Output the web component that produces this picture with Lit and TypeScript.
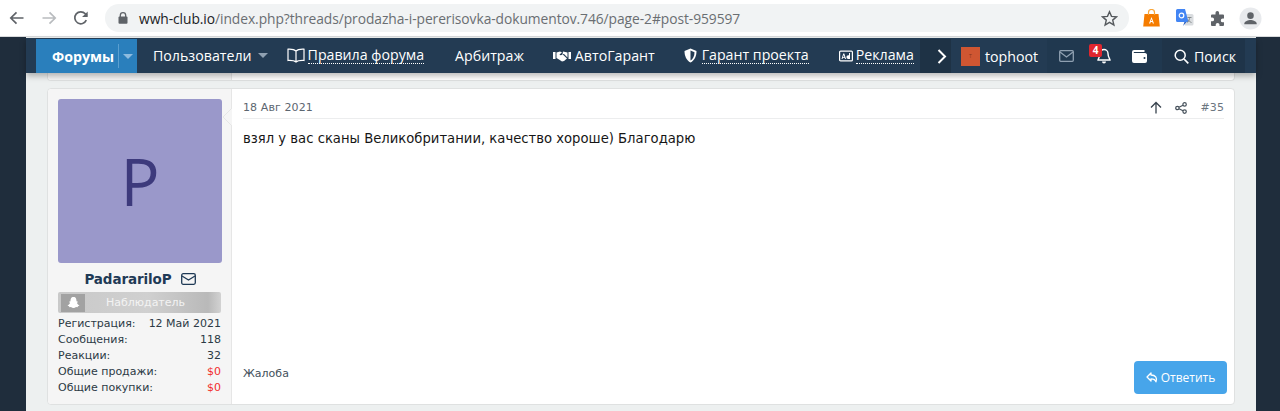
import { LitElement, html, css } from "lit";
import { customElement } from "lit/decorators.js";

const caret = html`<svg class="caret" width="10" height="5" viewBox="0 0 10 5"><path d="M0 0h10L5 5z" fill="currentColor"/></svg>`;

@customElement("app-root")
export class AppRoot extends LitElement {
  static styles = css`
    :host { display: block; width: 1280px; height: 411px; overflow: hidden; background: #1f2d3c; font-family: "DejaVu Sans", sans-serif; }
    .chrome { height: 37px; box-sizing: border-box; background: #fff; display: flex; align-items: center; border-bottom: 1px solid #d8dadc; padding-left: 8px; }
    .navbtn { width: 18px; height: 18px; flex: none; }
    .b1 { margin-right: 14px; } .b2 { margin-right: 14px; }
    .omni { margin-left: 15px; width: 1024px; height: 28px; flex: none; box-sizing: border-box; border-radius: 14px; background: #f1f3f4; display: flex; align-items: center; padding: 0 11px 0 13px; font: 13.8px "Open Sans", sans-serif; letter-spacing: -0.06px; color: #6a6e72; white-space: nowrap; }
    .omni b { font-weight: 400; color: #202124; }
    .lock { margin-right: 11px; flex: none; }
    .star { margin-left: auto; flex: none; }
    .ext { display: flex; align-items: center; margin-left: 14px; gap: 16px; }
    .ext svg { flex: none; display: block; }
    .ext .profile { margin-left: -2px; }
    .page { width: 1230px; margin-left: 26px; height: 374px; background: #edf0f0; position: relative; }
    nav { height: 35px; background: #233b53; color: #fff; display: flex; align-items: stretch; font: 14.2px "Open Sans", sans-serif; box-shadow: 0 3px 6px rgba(0,0,0,.28); position: relative; z-index: 2; white-space: nowrap; }
    .top { height: 1px; }
    .tabs { display: flex; align-items: center; flex: none; width: 894px; }
    .forums { width: 101px; margin-left: 10px; height: 34px; margin-top: 1px; background: #2a7fbc; display: flex; align-items: center; font-weight: 700; box-sizing: border-box; padding-left: 16px; flex: none; }
    .forums .sep { width: 1px; height: 24px; background: #5a9fd0; margin: 0 4px 0 4px; }
    .forums .caret { color: #8dbcdf; }
    .caret { display: block; }
    .it { display: flex; align-items: center; flex: none; }
    .it svg.ic { margin-right: 3px; flex: none; }
    .u { border-bottom: 1px dotted #fff; line-height: 16px; }
    .users { margin-left: 16px; } .users .caret { margin-left: 6px; color: #8fa0b1; }
    .rules { margin-left: 19px; } .arb { margin-left: 31px; } .ag { margin-left: 29px; } .ag svg.ic { margin-right: 4px; } .gp { margin-left: 29px; } .gp svg.ic { margin-right: 5px; } .ad { margin-left: 30px; }
    .more { width: 31px; box-sizing: border-box; padding-left: 17px; background: #1e3245; display: flex; align-items: center; flex: none; height: 34px; margin-top: 1px; }
    .right { display: flex; flex: 1; align-items: center; background: #233b53; height: 34px; margin-top: 1px; }
    .user { display: flex; align-items: center; margin-left: 10px; width: 86px; font-size: 14.2px; flex: none; }
    .ava { width: 19px; height: 19px; background: #cf5632; color: #8a3218; font: 5px "Open Sans", sans-serif; display: flex; align-items: center; justify-content: center; margin-right: 5px; }
    .cell { display: flex; align-items: center; justify-content: center; flex: none; height: 34px; position: relative; background: #20384f; }
    .mail { width: 38px; } .bell { width: 37px; } .wallet { width: 40px; box-sizing: border-box; padding-right: 5px; }
    .badge { position: absolute; left: 4px; top: 5px; width: 13px; height: 13px; background: #e0262e; border-radius: 2px; font: 700 10px/13px "Open Sans", sans-serif; text-align: center; }
    .search { background: #1f3449; padding-left: 12px; gap: 5px; width: 83px; box-sizing: border-box; justify-content: flex-start; }
    .prev { height: 8px; margin: 0 21px 7px 21px; box-sizing: border-box; background: #fff; border: 1px solid #dfe1e1; border-top: 0; border-radius: 0 0 4px 4px; display: flex; }
    .prev i { display: block; width: 183px; background: #f5f5f5; border-right: 1px solid #e6e6e6; border-bottom-left-radius: 4px; }
    .post { height: 317px; margin: 0 21px; box-sizing: border-box; background: #fff; border: 1px solid #dfe1e1; border-radius: 4px; display: flex; }
    .side { width: 184px; flex: none; box-sizing: border-box; background: #f5f5f5; border-right: 1px solid #e6e6e6; padding: 10px 9px 0 10px; border-radius: 4px 0 0 4px; position: relative; }
    .arrow { position: absolute; right: -1px; top: 19px; width: 9px; height: 18px; }
    .avatar { width: 164px; height: 164px; background: #9a98ca; color: #3d3a7c; border-radius: 3px; display: flex; align-items: center; justify-content: center; font: 65px/1 "Open Sans", sans-serif; }
    .name { display: flex; justify-content: center; align-items: center; gap: 9px; margin-top: 7px; height: 18px; font: 700 13.5px "DejaVu Sans", sans-serif; color: #1f3a56; letter-spacing: -.1px; }
    .rank { height: 21px; margin: 4px 1px 0 0; background: linear-gradient(90deg,#c9c9c9 0,#d0d0d0 55%,#b9b9b9 92%,#d2d2d2 100%); border-radius: 2px; display: flex; align-items: center; color: #f3f3f3; font-size: 11px; }
    .rank .g { width: 24px; height: 18px; margin-left: 3px; background: #a2a2a2; display: flex; align-items: center; justify-content: center; flex: none; }
    .rank span { flex: 1; text-align: center; padding-right: 15px; }
    dl { margin: 3px 1px 0 0; font-size: 11px; line-height: 16px; color: #2c3a45; }
    dl div { display: flex; justify-content: space-between; }
    dt, dd { margin: 0; white-space: nowrap; }
    .red { color: #f22c2c; }
    .main { flex: 1; min-width: 0; padding: 0 7px 0 11px; display: flex; flex-direction: column; }
    .head { height: 30px; margin-right: 3px; padding-top: 8px; box-sizing: border-box; border-bottom: 1px solid #ecedee; display: flex; align-items: center; font-size: 11px; color: #5c6670; letter-spacing: .1px; }
    .head .acts { margin-left: auto; display: flex; align-items: center; gap: 13px; font-size: 11px; color: #6b7680; }
    .head svg { display: block; }
    .msg { font-size: 13.2px; line-height: 18px; color: #161616; margin-top: 11px; flex: 1; }
    .foot { display: flex; justify-content: space-between; align-items: center; height: 33px; margin-bottom: 10px; font-size: 11px; color: #43505c; }
    .foot > span { margin-bottom: 8px; }
    .reply { width: 93px; height: 33px; box-sizing: border-box; background: #47a5ea; border-radius: 4px; color: #fff; font: 12px "Open Sans", sans-serif; display: flex; align-items: center; justify-content: center; gap: 2px; }
    .reply svg { flex: none; }
  `;

  render() {
    return html`
      <div class="chrome">
        <svg class="navbtn b1" viewBox="0 0 18 18"><path d="M15.5 9H3M8.5 3.3 2.8 9l5.7 5.7" fill="none" stroke="#5f6368" stroke-width="1.7"/></svg>
        <svg class="navbtn b2" viewBox="0 0 18 18"><path d="M2.5 9H15M9.500 3.300 15.200 9l-5.700 5.700" fill="none" stroke="#b9bcbf" stroke-width="1.7"/></svg>
        <svg class="navbtn" viewBox="0 0 18 18"><path d="M14.3 11.200A6 6 0 1 1 13.300 4.800L15 6.500" fill="none" stroke="#5f6368" stroke-width="1.7"/><path d="M15.700 2.500v5.600h-5.600z" fill="#5f6368"/></svg>
        <div class="omni">
          <svg class="lock" width="10" height="12" viewBox="0 0 10 12"><path d="M2.300 5V3.400a2.700 2.700 0 0 1 5.400 0V5" fill="none" stroke="#5f6368" stroke-width="1.3"/><rect x="0.5" y="4.600" width="9" height="7.200" rx="1" fill="#5f6368"/></svg>
          <span><b>wwh-club.io</b>/index.php?threads/prodazha-i-pererisovka-dokumentov.746/page-2#post-959597</span>
          <svg class="star" width="17" height="17" viewBox="0 0 17 17"><path d="m8.500 1.800 2 4.600 5 .4-3.800 3.300 1.200 4.900-4.400-2.600L4.100 15l1.200-4.900L1.500 6.800l5-.4z" fill="none" stroke="#55595d" stroke-width="1.4"/></svg>
        </div>
        <div class="ext">
          <svg width="17" height="18" viewBox="0 0 17 18"><path d="M1.500 5h14l1.300 12.500H.2z" fill="#f57c00"/><path d="M5.500 6V3.500a3 3 0 0 1 6 0V6" fill="none" stroke="#f9a63a" stroke-width="1.2"/><path d="M8.500 8 6 14.500h1.300l.5-1.500h1.500l.5 1.500H11zM8 12l.5-1.800L9.100 12z" fill="#fff"/></svg>
          <svg width="18" height="18" viewBox="0 0 18 18"><path d="M6 5h10a1.500 1.500 0 0 1 1.500 1.500V15a1.500 1.500 0 0 1-1.500 1.500H9z" fill="#d9dcdf"/><path d="M1.500 0H9l3.500 13H1.500A1.500 1.500 0 0 1 0 11.500v-10A1.500 1.500 0 0 1 1.500 0z" fill="#4285f4"/><path d="M8.500 13 7 17l3.500-4z" fill="#2a5fc0"/><circle cx="5.500" cy="6.500" r="2.300" fill="none" stroke="#fff" stroke-width="1.2"/><path d="M11.500 8.500h4M13.500 8v1.500c0 2-1.500 3.500-2.500 4M12 10.500c.5 1.200 2 2.500 3.500 3" stroke="#7d8285" stroke-width=".9" fill="none"/></svg>
          <svg width="15" height="15" viewBox="0 0 15 15"><path d="M5.500 1.800a1.800 1.800 0 0 1 3.600 0V3.500H13a1 1 0 0 1 1 1v3h-1.300a1.900 1.900 0 0 0 0 3.800H14V14a1 1 0 0 1-1 1H9.500v-1.200a1.900 1.900 0 0 0-3.800 0V15H2a1 1 0 0 1-1-1v-3.700h1.200a1.900 1.900 0 0 0 0-3.800H1v-2a1 1 0 0 1 1-1h3.500z" fill="#5f6368"/></svg>
          <svg class="profile" width="23" height="23" viewBox="0 0 24 24"><circle cx="12" cy="12" r="11.500" fill="#e8eaed"/><circle cx="12" cy="9" r="3.400" fill="#5f6368"/><path d="M5.500 17.500c0-2.800 4.300-4 6.500-4s6.500 1.200 6.500 4V18h-13z" fill="#5f6368"/></svg>
        </div>
      </div>
      <div class="page">
        <div class="top"></div>
        <nav>
          <div class="tabs">
            <div class="forums">Форумы<span class="sep"></span>${caret}</div>
            <div class="it users">Пользователи${caret}</div>
            <div class="it rules">
              <svg class="ic" width="18" height="15" viewBox="0 0 18 15"><path d="M9 3C7.500 1.500 5 1 1 1.200v11.300c4-.2 6.500.2 8 1.500 1.500-1.300 4-1.700 8-1.500V1.200C13 1 10.500 1.500 9 3zm0 0v11" fill="none" stroke="#fff" stroke-width="1.2"/></svg>
              <span class="u">Правила форума</span>
            </div>
            <div class="it arb">Арбитраж</div>
            <div class="it ag">
              <svg class="ic" width="18" height="12" viewBox="0 0 18 12"><path d="M0 2h2.500v7H0zM15.500 2H18v7h-2.500zM3.500 2.500 7 1.500l2 1-2.500 2c.5 1 2 1 3-.2l4.500 4.200-3 2.500-2 .5-3-2-2.500-1.500zM10 1.500l4.500 1v5L11 4l-1.500.2z" fill="#fff"/></svg>
              АвтоГарант
            </div>
            <div class="it gp">
              <svg class="ic" width="13" height="15" viewBox="0 0 13 15"><path d="M6.500.5 12.500 3c0 5-2 9.500-6 11.500-4-2-6-6.500-6-11.500z" fill="#fff"/><path d="M6.500 2.500v10c2.500-1.500 4-4.500 4-8.300z" fill="#233b53"/></svg>
              <span class="u">Гарант проекта</span>
            </div>
            <div class="it ad">
              <svg class="ic" width="14" height="12" viewBox="0 0 14 12"><rect x=".6" y="1.100" width="12.800" height="9.800" rx="1" fill="none" stroke="#fff" stroke-width="1.2"/><path d="M2.500 9 4.300 3.500h1L7 9H6l-.3-1H3.800l-.3 1zM4 7.200h1.400l-.7-2.300zM11 3v6H9.300a1.800 1.800 0 0 1 0-3.800H10V3z" fill="#fff"/></svg>
              <span class="u">Реклама</span>
            </div>
          </div>
          <div class="more">
            <svg width="10" height="15" viewBox="0 0 10 15"><path d="m1.500 1 6.500 6.500L1.500 14" fill="none" stroke="#fff" stroke-width="2"/></svg>
          </div>
          <div class="right">
            <div class="user"><span class="ava">T</span>tophoot</div>
            <div class="cell mail">
              <svg width="15" height="12" viewBox="0 0 15 12"><rect x=".7" y=".7" width="13.600" height="10.600" rx="1" fill="none" stroke="#8fa0b1" stroke-width="1.3"/><path d="m1 2 6.500 5L14 2" fill="none" stroke="#8fa0b1" stroke-width="1.3"/></svg>
            </div>
            <div class="cell bell">
              <svg width="14" height="16" viewBox="0 0 14 16"><path d="M7 1.500a4 4 0 0 1 4 4c0 4 2 5 2 6.500H1c0-1.500 2-2.500 2-6.500a4 4 0 0 1 4-4z" fill="none" stroke="#fff" stroke-width="1.4"/><path d="M5 13.500a2 2 0 0 0 4 0z" fill="#fff"/></svg>
              <span class="badge">4</span>
            </div>
            <div class="cell wallet">
              <svg width="15" height="13" viewBox="0 0 15 13"><path d="M2 0h10.500v2H2a.6.6 0 0 0 0 1h11a2 2 0 0 1 2 1.500V11a2 2 0 0 1-2 2H2a2 2 0 0 1-2-2V2a2 2 0 0 1 2-2zm10.500 7a1 1 0 1 0 0 2 1 1 0 0 0 0-2z" fill="#fff"/></svg>
            </div>
            <div class="cell search">
              <svg width="15" height="15" viewBox="0 0 15 15"><circle cx="6.200" cy="6.200" r="5" fill="none" stroke="#fff" stroke-width="1.5"/><path d="m10 10 4.300 4.300" stroke="#fff" stroke-width="1.7"/></svg>
              Поиск
            </div>
          </div>
        </nav>
        <div class="prev"><i></i></div>
        <div class="post">
          <div class="side">
            <svg class="arrow" viewBox="0 0 9 18"><path d="M9 0 0 9l9 9z" fill="#fff"/><path d="M9 0 0 9l9 9" fill="#f5f5f5" stroke="#e6e6e6"/></svg>
            <div class="avatar">P</div>
            <div class="name">PadarariloP
              <svg width="15" height="12" viewBox="0 0 15 12"><rect x=".7" y=".7" width="13.600" height="10.600" rx="1.5" fill="none" stroke="#1f3a56" stroke-width="1.3"/><path d="m1 3 6.500 4L14 3" fill="none" stroke="#1f3a56" stroke-width="1.3"/></svg>
            </div>
            <div class="rank">
              <div class="g"><svg width="13" height="13" viewBox="0 0 13 13"><path d="M6.500 1C9 1 9.500 3.200 9.500 5.200l1.500.6-1 1.200c.4 1.300 1.500 2 2.500 2.400l-1.500.8-.5 1-1.500-.2c-.7.5-1.500 1-2.500 1s-1.800-.5-2.500-1l-1.500.2-.5-1L.5 9.400C1.500 9 2.600 8.300 3 7L2 5.800l1.500-.6C3.500 3.200 4 1 6.500 1z" fill="#fff"/></svg></div>
              <span>Наблюдатель</span>
            </div>
            <dl>
              <div><dt>Регистрация:</dt><dd>12 Май 2021</dd></div>
              <div><dt>Сообщения:</dt><dd>118</dd></div>
              <div><dt>Реакции:</dt><dd>32</dd></div>
              <div><dt>Общие продажи:</dt><dd class="red">$0</dd></div>
              <div><dt>Общие покупки:</dt><dd class="red">$0</dd></div>
            </dl>
          </div>
          <div class="main">
            <div class="head">18 Авг 2021
              <div class="acts">
                <svg width="12" height="13" viewBox="0 0 12 13"><path d="M6 12.500V1.500M1 6.500l5-5 5 5" fill="none" stroke="#37424d" stroke-width="1.3"/></svg>
                <svg width="12" height="12" viewBox="0 0 12 12"><g fill="none" stroke="#47525c" stroke-width="1.2"><circle cx="2.400" cy="6" r="1.700"/><circle cx="9.600" cy="2.400" r="1.700"/><circle cx="9.600" cy="9.600" r="1.700"/><path d="m4 5.200 4-2M4 6.800l4 2"/></g></svg>
                <span>#35</span>
              </div>
            </div>
            <div class="msg">взял у вас сканы Великобритании, качество хороше) Благодарю</div>
            <div class="foot"><span>Жалоба</span>
              <div class="reply">
                <svg width="13" height="13" viewBox="0 0 13 13"><path d="M5 2 1 6l4 4V7.800c2.800 0 4.300.8 5 3 1.500-3.800-.5-6.800-5-6.800z" fill="none" stroke="#fff" stroke-width="1.3" stroke-linejoin="round"/></svg>
                Ответить
              </div>
            </div>
          </div>
        </div>
      </div>
    `;
  }
}
